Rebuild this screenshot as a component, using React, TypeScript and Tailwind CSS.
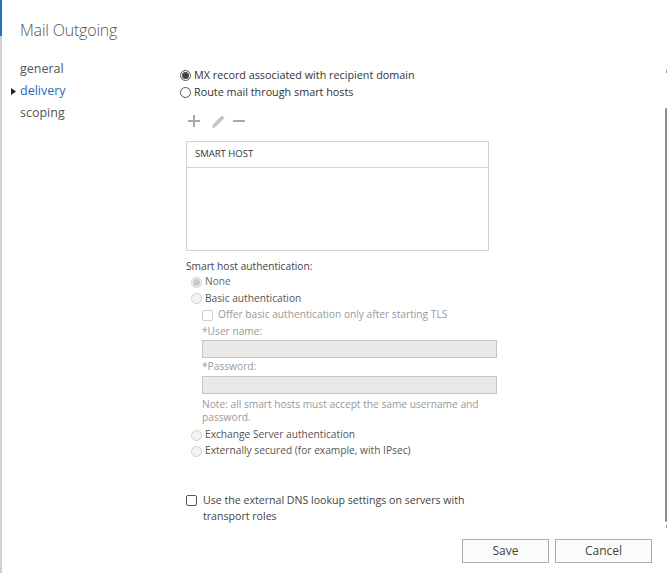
import React from 'react';

const font = { fontFamily: '"Open Sans", "Noto Sans", sans-serif' };

const Radio: React.FC<{ checked?: boolean; disabled?: boolean }> = ({ checked, disabled }) => (
  <span
    className={`inline-flex h-[11px] w-[11px] shrink-0 items-center justify-center rounded-full border ${
      disabled ? 'border-[#cfcfcf] bg-[#f4f4f4]' : 'border-[#555] bg-white'
    }`}
  >
    {checked && (
      <span className={`h-[7px] w-[7px] rounded-full ${disabled ? 'bg-[#c8c8c8]' : 'bg-[#444]'}`} />
    )}
  </span>
);

const Check: React.FC<{ disabled?: boolean }> = ({ disabled }) => (
  <span
    className={`inline-block h-[11px] w-[11px] shrink-0 rounded-[2px] border ${
      disabled ? 'border-[#cfcfcf] bg-white' : 'border-[#555] bg-white'
    }`}
  />
);

const NavItem: React.FC<{ label: string; active?: boolean }> = ({ label, active }) => (
  <div className="relative flex h-[22px] items-center">
    {active && (
      <svg className="absolute left-[-9px] top-[8px]" width="5" height="7" viewBox="0 0 5 7">
        <path d="M0 0 L5 3.5 L0 7 Z" fill="#222" />
      </svg>
    )}
    <span className={`text-[12.5px] ${active ? 'text-[#1e6db5]' : 'text-[#555]'}`}>{label}</span>
  </div>
);

export default function App() {
  return (
    <div className="relative h-[573px] w-[668px] overflow-hidden bg-white text-[#333]" style={font}>
      {/* window edge */}
      <div className="absolute left-0 top-0 h-full w-[2px] bg-[#cfcfcf]" />
      <div className="absolute left-0 top-0 h-[36px] w-[2px] bg-[#2a6ebb]" />
      {/* scrollbar */}
      <div className="absolute right-[1px] top-[108px] h-[414px] w-[2px] rounded bg-[#8e8e8e]" />
      <div className="absolute right-[1px] top-[70px] h-[3px] w-[1px] bg-[#999]" />
      <div className="absolute right-[1px] top-[525px] h-[3px] w-[1px] bg-[#999]" />

      <div className="pl-5 pt-[19px]">
        <h1 className="text-[16px] font-light leading-[22px] tracking-[-0.2px] text-[#555]">Mail Outgoing</h1>
      </div>

      <div className="mt-[17px] flex">
        <nav className="w-[160px] shrink-0 pl-5">
          <NavItem label="general" />
          <NavItem label="delivery" active />
          <NavItem label="scoping" />
        </nav>

        <div className="flex-1 text-[10.2px] text-[#333]">
          <div className="mt-[9px] pl-[20px] text-[10.8px]">
            <label className="flex h-[17px] items-center gap-[3px]">
              <Radio checked />
              <span>MX record associated with recipient domain</span>
            </label>
            <label className="flex h-[17px] items-center gap-[3px]">
              <Radio />
              <span>Route mail through smart hosts</span>
            </label>
          </div>

          <div className="ml-[28px] mt-[12px] flex h-[16px] items-center">
            <svg width="12" height="12" viewBox="0 0 12 12">
              <path d="M6 0 V12 M0 6 H12" stroke="#a8a8a8" strokeWidth="2" />
            </svg>
            <svg className="ml-[11px]" width="15" height="15" viewBox="0 0 15 15">
              <path d="M1 14 L2 10.5 L11 1.5 L13.5 4 L4.5 13 Z" fill="#c4c4c4" />
            </svg>
            <svg className="ml-[7px]" width="12" height="12" viewBox="0 0 12 12">
              <path d="M0 6 H12" stroke="#a8a8a8" strokeWidth="2" />
            </svg>
          </div>

          <div className="ml-[26px] mt-[12px] h-[110px] w-[303px] border border-[#c9d4de]">
            <div className="flex h-[26px] items-center border-b border-[#c9d4de] pl-[8px] text-[9.5px] text-[#333]">
              SMART HOST
            </div>
          </div>

          <div className="ml-[26px] mt-[7px] h-[16px] leading-[16px] text-[#444]">Smart host authentication:</div>
          <div className="ml-[31px] text-[#888]">
            <label className="flex h-[16px] items-center gap-[3px]">
              <Radio checked disabled />
              <span className="text-[#666]">None</span>
            </label>
            <label className="flex h-[17px] items-center gap-[3px]">
              <Radio disabled />
              <span className="text-[#555]">Basic authentication</span>
            </label>
            <div className="pl-[11px]">
              <label className="flex h-[16px] items-center gap-[5px]">
                <Check disabled />
                <span className="text-[#999]">Offer basic authentication only after starting TLS</span>
              </label>
              <div className="h-[16px] leading-[16px] text-[#999]">*User name:</div>
              <div className="mt-[1px] h-[18px] w-[295px] border border-[#c6c6c6] bg-[#e9e9e9]" />
              <div className="h-[16px] leading-[16px] text-[#999]">*Password:</div>
              <div className="mt-[2px] h-[18px] w-[295px] border border-[#c6c6c6] bg-[#e9e9e9]" />
              <div className="mt-[4px] w-[295px] leading-[13px] text-[#999]">
                Note: all smart hosts must accept the same username and password.
              </div>
            </div>
            <label className="mt-[3px] flex h-[16px] items-center gap-[3px]">
              <Radio disabled />
              <span className="text-[#555]">Exchange Server authentication</span>
            </label>
            <label className="flex h-[16px] items-center gap-[3px]">
              <Radio disabled />
              <span className="text-[#555]">Externally secured (for example, with IPsec)</span>
            </label>
          </div>

          <label className="ml-[26px] mt-[33px] flex w-[300px] items-start gap-[6px] text-[10.6px] leading-[16px] text-[#444]">
            <span className="mt-[2px]">
              <Check />
            </span>
            <span>Use the external DNS lookup settings on servers with transport roles</span>
          </label>

          <div className="mr-[16px] mt-[15px] flex justify-end gap-[6px]">
            <button className="h-[24px] w-[87px] border border-[#acacac] bg-[#fbfbfb] text-[12px] text-[#444]">
              Save
            </button>
            <button className="h-[24px] w-[97px] border border-[#acacac] bg-[#fbfbfb] text-[12px] text-[#444]">
              Cancel
            </button>
          </div>
        </div>
      </div>
    </div>
  );
}
